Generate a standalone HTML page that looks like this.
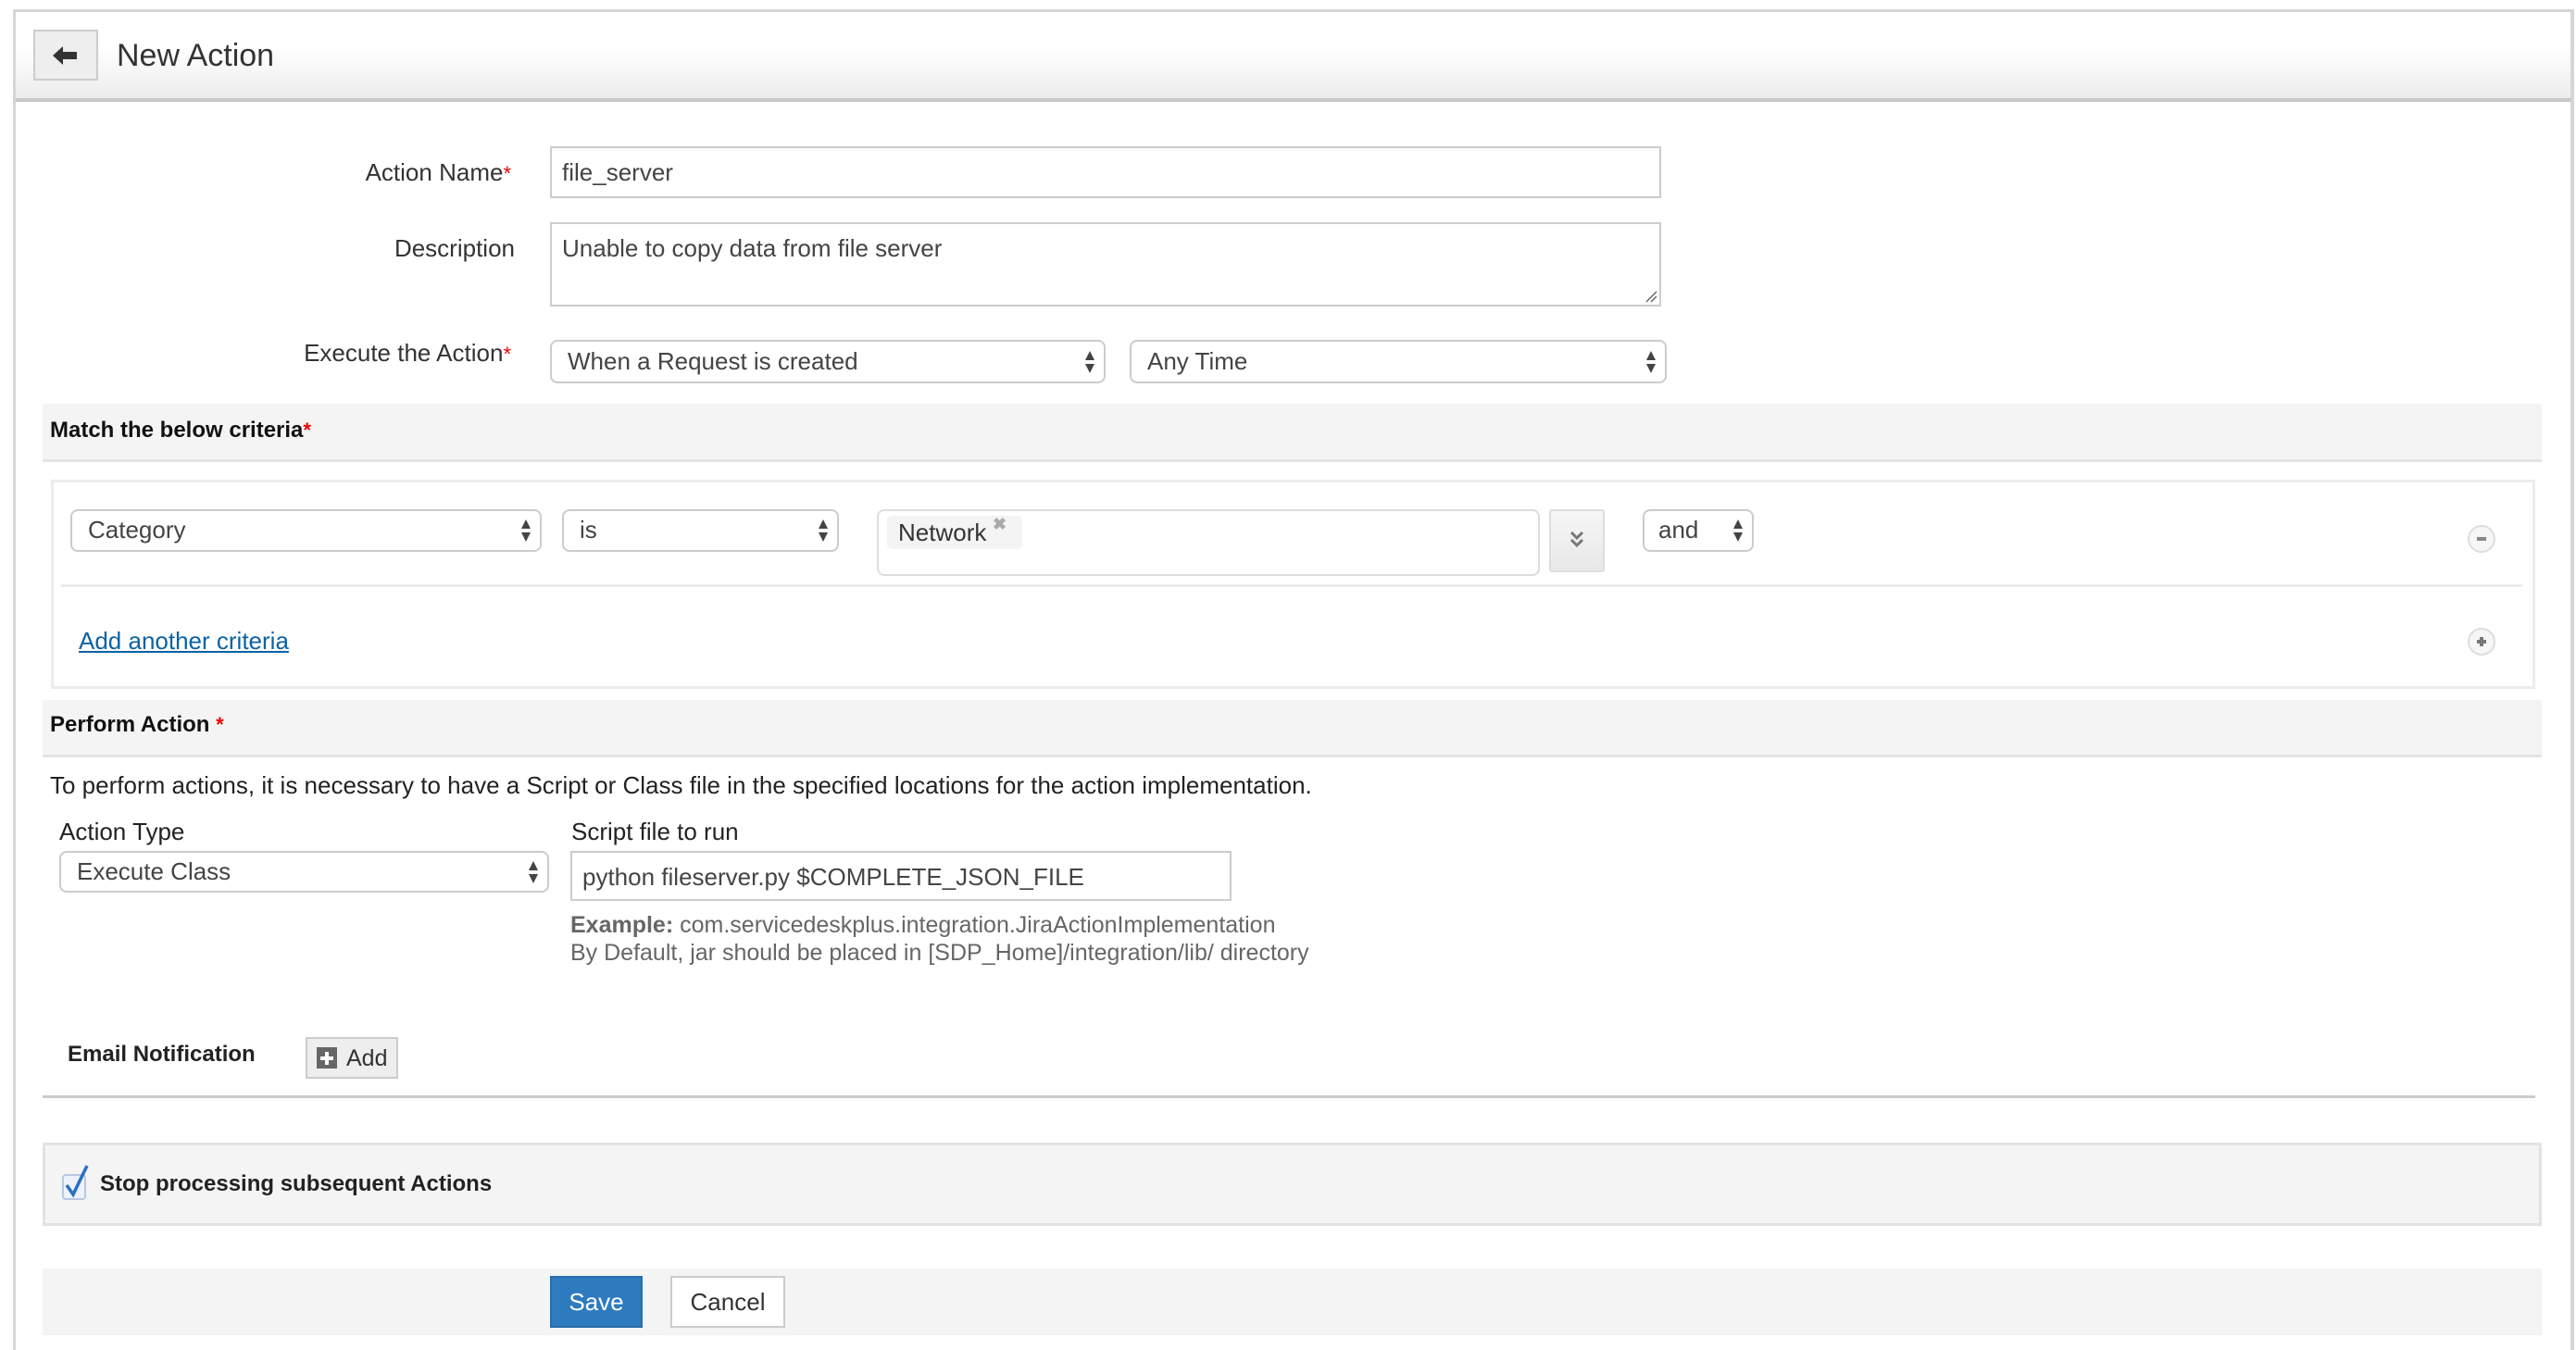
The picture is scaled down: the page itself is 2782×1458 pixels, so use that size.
<!DOCTYPE html>
<html><head><meta charset="utf-8"><style>
*{box-sizing:border-box;margin:0;padding:0}
html,body{width:2782px;height:1458px;overflow:hidden}
body{background:#fff;font-family:"Liberation Sans",Arial,sans-serif;color:#333;position:relative;font-size:26px}
.a{position:absolute}
.lbl{position:absolute;text-align:right;font-size:26px;color:#333;line-height:30px}
.req{color:#e00;font-size:22px}
.inp{position:absolute;border:2px solid #ccc;background:#fff;font-size:26px;color:#444;padding-left:11px}
.sel{position:absolute;border:2px solid #ccc;border-radius:8px;background:#fff;font-size:26px;color:#444;padding-left:17px;line-height:42px}
.arr{position:absolute;right:9px;top:50%;margin-top:-14px;width:12px;height:28px}
.band{position:absolute;left:46px;width:2699px;background:#f4f4f4;border-bottom:3px solid #e4e4e4}
.b{font-weight:bold;color:#111}
</style></head><body>
<div class="a" style="left:14px;top:10px;width:2766px;height:1448px;border:3px solid #d6d6d6;border-right-width:4px;border-bottom:0"></div>
<div class="a" style="left:17px;top:13px;width:2759px;height:97px;background:linear-gradient(#fff 40%,#ececec);border-bottom:4px solid #c8c8c8"></div>
<div class="a" style="left:36px;top:32px;width:70px;height:55px;border:2px solid #ccc;background:#eee"></div>
<svg class="a" style="left:57px;top:50px" width="28" height="20" viewBox="0 0 28 20"><path d="M0 10 L11 0 L11 6 L26 6 L26 14 L11 14 L11 20 Z" fill="#333"/></svg>
<div class="a" style="left:126px;top:38px;font-size:34px;color:#333;line-height:44px">New Action</div>

<div class="lbl" style="left:200px;width:352px;top:171px">Action Name<span class="req">*</span></div>
<div class="inp" style="left:594px;top:158px;width:1200px;height:56px;line-height:52px">file_server</div>
<div class="lbl" style="left:200px;width:356px;top:253px">Description</div>
<div class="inp" style="left:594px;top:240px;width:1200px;height:91px;line-height:52px">Unable to copy data from file server</div>
<svg class="a" style="left:1776px;top:313px" width="14" height="14"><path d="M2 13 L13 2 M7 13 L13 7" stroke="#666" stroke-width="1.5"/></svg>
<div class="lbl" style="left:200px;width:352px;top:366px">Execute the Action<span class="req">*</span></div>
<div class="sel" style="left:594px;top:367px;width:600px;height:47px">When a Request is created<svg class="arr" viewBox="0 0 12 28"><path d="M6 2 L11 12 L1 12Z M1 16 L11 16 L6 26Z" fill="#444"/></svg></div>
<div class="sel" style="left:1220px;top:367px;width:580px;height:47px">Any Time<svg class="arr" viewBox="0 0 12 28"><path d="M6 2 L11 12 L1 12Z M1 16 L11 16 L6 26Z" fill="#444"/></svg></div>

<div class="band" style="top:436px;height:63px"></div>
<div class="a b" style="left:54px;top:450px;line-height:30px;font-size:24px">Match the below criteria<span class="req">*</span></div>
<div class="a" style="left:55px;top:518px;width:2683px;height:226px;border:3px solid #ececec"></div>
<div class="sel" style="left:76px;top:550px;width:509px;height:46px;line-height:40px">Category<svg class="arr" viewBox="0 0 12 28"><path d="M6 2 L11 12 L1 12Z M1 16 L11 16 L6 26Z" fill="#444"/></svg></div>
<div class="sel" style="left:607px;top:550px;width:299px;height:46px;line-height:40px">is<svg class="arr" viewBox="0 0 12 28"><path d="M6 2 L11 12 L1 12Z M1 16 L11 16 L6 26Z" fill="#444"/></svg></div>
<div class="a" style="left:947px;top:550px;width:716px;height:72px;border:2px solid #ddd;border-radius:8px"></div>
<div class="a" style="left:958px;top:557px;width:146px;height:36px;background:#f4f4f4;border-radius:5px"></div>
<div class="a" style="left:970px;top:558px;font-size:26px;color:#333;line-height:34px">Network</div>
<div class="a" style="left:1072px;top:556px;font-size:18px;color:#aaa;font-weight:bold">✖</div>
<div class="a" style="left:1673px;top:550px;width:60px;height:68px;background:linear-gradient(#f6f6f6,#e8e8e8);border:2px solid #ddd;border-radius:3px"></div>
<svg class="a" style="left:1694px;top:572px" width="18" height="22"><path d="M3 3 L9 9 L15 3 M3 11 L9 17 L15 11" stroke="#777" stroke-width="3" fill="none"/></svg>
<div class="sel" style="left:1774px;top:550px;width:120px;height:46px;line-height:40px;padding-left:15px">and<svg class="arr" viewBox="0 0 12 28"><path d="M6 2 L11 12 L1 12Z M1 16 L11 16 L6 26Z" fill="#444"/></svg></div>
<div class="a" style="left:2665px;top:567px;width:30px;height:30px;border-radius:50%;background:#f6f6f6;border:2px solid #ddd"></div>
<div class="a" style="left:2675px;top:580px;width:10px;height:4px;background:#888"></div>
<div class="a" style="left:66px;top:631px;width:2658px;height:3px;background:#ececec"></div>
<div class="a" style="left:85px;top:677px;font-size:26px;color:#0b62a4;text-decoration:underline;line-height:30px">Add another criteria</div>
<div class="a" style="left:2665px;top:678px;width:30px;height:30px;border-radius:50%;background:#f6f6f6;border:2px solid #ddd"></div>
<div class="a" style="left:2675px;top:691px;width:10px;height:4px;background:#777"></div>
<div class="a" style="left:2678px;top:688px;width:4px;height:10px;background:#777"></div>

<div class="band" style="top:756px;height:62px"></div>
<div class="a b" style="left:54px;top:768px;line-height:30px;font-size:24px">Perform Action <span class="req">*</span></div>
<div class="a" style="left:54px;top:833px;line-height:30px;color:#222">To perform actions, it is necessary to have a Script or Class file in the specified locations for the action implementation.</div>
<div class="a" style="left:64px;top:883px;line-height:30px;color:#222">Action Type</div>
<div class="sel" style="left:64px;top:919px;width:529px;height:45px;line-height:40px">Execute Class<svg class="arr" viewBox="0 0 12 28"><path d="M6 2 L11 12 L1 12Z M1 16 L11 16 L6 26Z" fill="#444"/></svg></div>
<div class="a" style="left:617px;top:883px;line-height:30px;color:#222">Script file to run</div>
<div class="inp" style="left:616px;top:919px;width:714px;height:54px;line-height:52px">python fileserver.py $COMPLETE_JSON_FILE</div>
<div class="a" style="left:616px;top:984px;line-height:30px;color:#666;font-size:25px"><b>Example:</b> com.servicedeskplus.integration.JiraActionImplementation</div>
<div class="a" style="left:616px;top:1014px;line-height:30px;color:#666;font-size:25px">By Default, jar should be placed in [SDP_Home]/integration/lib/ directory</div>

<div class="a b" style="left:73px;top:1124px;line-height:30px;font-size:24px;color:#222">Email Notification</div>
<div class="a" style="left:330px;top:1120px;width:100px;height:45px;background:#eee;border:2px solid #ccc"></div>
<div class="a" style="left:342px;top:1131px;width:22px;height:23px;background:#666"></div>
<div class="a" style="left:346px;top:1141px;width:14px;height:4px;background:#fff"></div>
<div class="a" style="left:351px;top:1136px;width:4px;height:14px;background:#fff"></div>
<div class="a" style="left:374px;top:1128px;line-height:30px;color:#333;font-size:25px">Add</div>
<div class="a" style="left:46px;top:1183px;width:2692px;height:3px;background:#ccc"></div>

<div class="a" style="left:46px;top:1234px;width:2699px;height:90px;background:#f4f4f4;border:3px solid #e2e2e2"></div>
<div class="a" style="left:67px;top:1268px;width:26px;height:28px;border:2px solid #b8c8e0;border-radius:4px;background:#eef3fb"></div>
<svg class="a" style="left:68px;top:1256px" width="30" height="38"><path d="M4 24 L11 34 L26 3" stroke="#2a6fc2" stroke-width="3.5" fill="none"/></svg>
<div class="a b" style="left:108px;top:1264px;line-height:30px;font-size:24px;color:#222">Stop processing subsequent Actions</div>

<div class="a" style="left:46px;top:1370px;width:2699px;height:72px;background:#f4f4f4"></div>
<div class="a" style="left:594px;top:1378px;width:100px;height:56px;background:#2f7bbf;border:2px solid #2a6cab;color:#fff;text-align:center;line-height:52px;font-size:26px">Save</div>
<div class="a" style="left:724px;top:1378px;width:124px;height:56px;background:#fff;border:2px solid #ccc;color:#333;text-align:center;line-height:52px;font-size:26px">Cancel</div>
</body></html>
